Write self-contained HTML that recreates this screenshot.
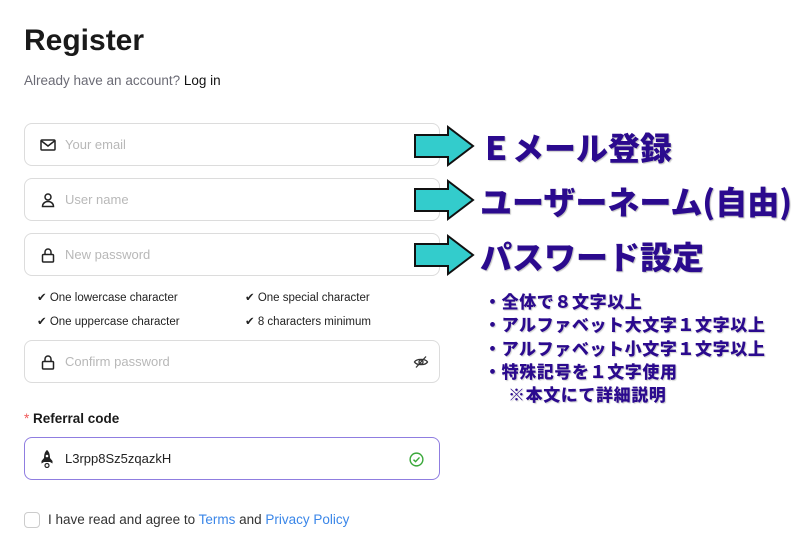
<!DOCTYPE html>
<html><head><meta charset="utf-8"><style>
*{margin:0;padding:0;box-sizing:border-box}
body{width:799px;height:560px;background:#fff;position:relative;overflow:hidden;font-family:"Liberation Sans","Noto Sans CJK JP",sans-serif;color:#1a1a1a}
.a{position:absolute}
.inp{position:absolute;left:24px;width:416px;height:43px;border:1px solid #dcdcdc;border-radius:8px}
.ph{position:absolute;left:40px;top:13px;font-size:13px;color:#b8b8b8}
.ic{position:absolute;left:15px;top:13px}
.chk{font-size:11.5px;color:#222}
.jp{position:absolute;left:480px;font-family:"Noto Sans CJK JP",sans-serif;font-weight:900;color:#2b0a8e;font-size:32px;letter-spacing:0px;text-shadow:1px 1px 1px rgba(0,0,0,.25);white-space:nowrap;line-height:1}
.sm{position:absolute;left:484px;font-family:"Noto Sans CJK JP",sans-serif;font-weight:900;color:#2b0a8e;font-size:17px;letter-spacing:0.6px;line-height:23.3px;white-space:nowrap;text-shadow:1px 1px 1px rgba(0,0,0,.2)}
</style></head><body>
<div class="a" style="left:24px;top:24px;font-size:30px;font-weight:bold;color:#1a1a1a">Register</div>
<div class="a" style="left:24px;top:73px;font-size:13.5px;color:#6b6b75">Already have an account? <span style="color:#111">Log in</span></div>

<div class="inp" style="top:123px"><svg class="ic" width="16" height="16" viewBox="0 0 16 16"><rect x="1" y="3" width="14" height="10" rx="1" fill="none" stroke="#222" stroke-width="1.5"/><path d="M1.5 4 8 9 14.5 4" fill="none" stroke="#222" stroke-width="1.5"/></svg><div class="ph">Your email</div></div>
<div class="inp" style="top:178px"><svg class="ic" width="16" height="16" viewBox="0 0 16 16"><circle cx="8" cy="5" r="3" fill="none" stroke="#222" stroke-width="1.5"/><path d="M2.5 14.5h11c0-3-2.5-5-5.5-5s-5.5 2-5.5 5z" fill="none" stroke="#222" stroke-width="1.5"/></svg><div class="ph">User name</div></div>
<div class="inp" style="top:233px"><svg class="ic" width="16" height="16" viewBox="0 0 16 16"><rect x="2.5" y="7.5" width="11" height="7.5" rx="1" fill="none" stroke="#222" stroke-width="1.5"/><path d="M5 7.5V5a3 3 0 0 1 6 0v2.5" fill="none" stroke="#222" stroke-width="1.5"/></svg><div class="ph">New password</div></div>

<div class="a chk" style="left:37px;top:290px">✔&#xFE0E; One lowercase character</div>
<div class="a chk" style="left:245px;top:290px">✔&#xFE0E; One special character</div>
<div class="a chk" style="left:37px;top:314px">✔&#xFE0E; One uppercase character</div>
<div class="a chk" style="left:245px;top:314px">✔&#xFE0E; 8 characters minimum</div>

<div class="inp" style="top:340px"><svg class="ic" width="16" height="16" viewBox="0 0 16 16"><rect x="2.5" y="7.5" width="11" height="7.5" rx="1" fill="none" stroke="#222" stroke-width="1.5"/><path d="M5 7.5V5a3 3 0 0 1 6 0v2.5" fill="none" stroke="#222" stroke-width="1.5"/></svg><div class="ph">Confirm password</div>
<svg class="a" style="left:388px;top:14px" width="16" height="14" viewBox="0 0 16 14"><path d="M1.5 7C3.5 3.5 12.5 3.5 14.5 7 12.5 10.5 3.5 10.5 1.5 7z" fill="none" stroke="#333" stroke-width="1.3"/><circle cx="8" cy="7" r="2" fill="none" stroke="#333" stroke-width="1.3"/><path d="M3 12.5 13 1.5" stroke="#333" stroke-width="1.3"/></svg></div>

<div class="a" style="left:24px;top:411px;font-size:13.5px;font-weight:bold"><span style="color:#f05a5a;font-weight:normal">*</span> Referral code</div>
<div class="inp" style="top:437px;border-color:#8f7de0"><svg class="ic" style="left:16px;top:12px" width="12" height="18" viewBox="0 0 12 18"><path d="M6 0C3.5 2 3 5 3 9v3h6V9c0-4-.5-7-3-9z" fill="#222"/><circle cx="6" cy="6" r="1.3" fill="#fff"/><path d="M3 8 0.5 11v2.5L3 12zM9 8l2.5 3v2.5L9 12z" fill="#222"/><circle cx="6" cy="15.5" r="2" fill="none" stroke="#222" stroke-width="1.2"/></svg>
<div class="ph" style="color:#222;left:40px">L3rpp8Sz5zqazkH</div>
<svg class="a" style="left:384px;top:14px" width="15" height="15" viewBox="0 0 16 16"><circle cx="8" cy="8" r="6.8" fill="none" stroke="#3aa83a" stroke-width="1.5"/><path d="M4.8 8.2 7 10.3 11.2 5.8" fill="none" stroke="#3aa83a" stroke-width="1.5"/></svg></div>

<div class="a" style="left:24px;top:512px;width:16px;height:16px;border:1px solid #ccc;border-radius:4px"></div>
<div class="a" style="left:48px;top:512px;font-size:13.5px;color:#333">I have read and agree to <span style="color:#3a86e8">Terms</span> and <span style="color:#3a86e8">Privacy Policy</span></div>

<svg class="a" style="left:0;top:0" width="799" height="560">
<g fill="#33cccc" stroke="#111" stroke-width="2" stroke-linejoin="miter">
<polygon points="415,135 448,135 448,127 473,146 448,165 448,157 415,157"/>
<polygon points="415,189 448,189 448,181 473,200 448,219 448,211 415,211"/>
<polygon points="415,244 448,244 448,236 473,255 448,274 448,266 415,266"/>
</g></svg>

<div class="jp" style="top:131px">Ｅメール登録</div>
<div class="jp" style="top:185px">ユーザーネーム(自由)</div>
<div class="jp" style="top:240px">パスワード設定</div>
<div class="sm" style="top:289px">・全体で８文字以上<br>・アルファベット大文字１文字以上<br>・アルファベット小文字１文字以上<br>・特殊記号を１文字使用<br><span style="padding-left:24px">※本文にて詳細説明</span></div>
</body></html>
